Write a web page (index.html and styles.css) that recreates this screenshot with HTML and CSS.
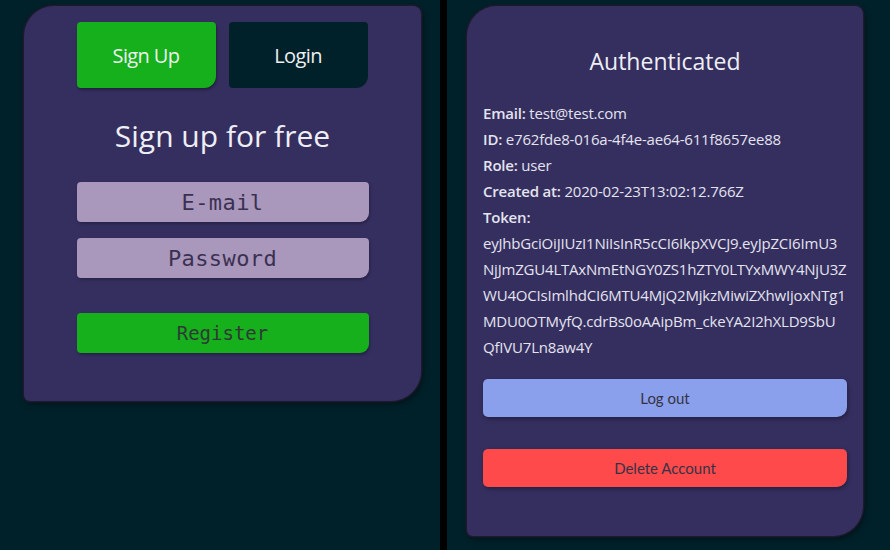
FILE: index.html
```html
<!DOCTYPE html>
<html>
<head>
<meta charset="utf-8">
<link rel="stylesheet" href="styles.css">
</head>
<body>
<div class="page">
  <section class="panel panel-left">
    <div class="card card-left">
      <div class="tabs">
        <button class="tab tab-active">Sign Up</button>
        <button class="tab tab-idle">Login</button>
      </div>
      <h1 class="title">Sign up for free</h1>
      <div class="field">E-mail</div>
      <div class="field">Password</div>
      <button class="register">Register</button>
    </div>
  </section>
  <div class="divider"></div>
  <section class="panel panel-right">
    <div class="card card-right">
      <h2 class="auth-title">Authenticated</h2>
      <div class="info">
        <p><b>Email:</b> test@test.com</p>
        <p><b>ID:</b> e762fde8-016a-4f4e-ae64-611f8657ee88</p>
        <p><b>Role:</b> user</p>
        <p><b>Created at:</b> 2020-02-23T13:02:12.766Z</p>
        <p><b>Token:</b></p>
        <p class="token">eyJhbGciOiJIUzI1NiIsInR5cCI6IkpXVCJ9.eyJpZCI6ImU3<br>NjJmZGU4LTAxNmEtNGY0ZS1hZTY0LTYxMWY4NjU3Z<br>WU4OCIsImlhdCI6MTU4MjQ2MjkzMiwiZXhwIjoxNTg1<br>MDU0OTMyfQ.cdrBs0oAAipBm_ckeYA2I2hXLD9SbU<br>QfIVU7Ln8aw4Y</p>
      </div>
      <button class="action logout">Log out</button>
      <button class="action delete">Delete Account</button>
    </div>
  </section>
</div>
</body>
</html>
```

FILE: styles.css
```css
* { box-sizing: border-box; }
html, body { margin: 0; padding: 0; }
body {
  background: #00212a;
  width: 890px;
  height: 550px;
  overflow: hidden;
  font-family: "Open Sans", "Noto Sans", sans-serif;
}
.page {
  display: flex;
  height: 550px;
}
.panel-left {
  width: 440px;
  padding: 6px 0 0 24px;
}
.divider {
  width: 7px;
  background: #000;
}
.panel-right {
  width: 443px;
  padding: 6px 0 0 20px;
}
.card {
  background: #352f60;
  border-radius: 30px 8px 30px 6px;
  box-shadow: 0 0 0 1.5px #1c1a2c, 2px 3px 6px rgba(0,0,0,0.45);
}
.card-left {
  width: 397px;
  height: 395px;
  padding: 16px 0 0 0;
  display: flex;
  flex-direction: column;
  align-items: center;
}
.tabs {
  display: flex;
  gap: 13px;
  margin-left: -1px;
}
.tab {
  border: none;
  width: 139px;
  height: 66px;
  font-family: "Open Sans", sans-serif;
  font-size: 20px;
  color: #eef0f0;
  border-radius: 4px 4px 12px 4px;
  letter-spacing: -0.6px;
  padding: 0;
}
.tab-active {
  background: #15b01b;
  box-shadow: 1px 2px 3px rgba(0,0,0,0.35);
}
.tab-idle {
  background: #00212a;
}
.title {
  margin: 28px 0 0 0;
  font-weight: 400;
  font-size: 30px;
  line-height: 40px;
  color: #eeeef4;
  letter-spacing: 0px;
}
.field {
  width: 292px;
  height: 40px;
  margin-top: 16px;
  background: #aa97bc;
  border-radius: 4px 4px 9px 4px;
  font-family: "DejaVu Sans Mono", monospace;
  font-size: 22px;
  color: #3a3152;
  display: flex;
  align-items: center;
  justify-content: center;
  box-shadow: 1px 2px 3px rgba(0,0,0,0.25);
  letter-spacing: 0.4px;
}
.title + .field { margin-top: 26px; }
.register {
  width: 292px;
  height: 40px;
  margin-top: 35px;
  border: none;
  background: #15b01b;
  border-radius: 4px 4px 9px 4px;
  font-family: "DejaVu Sans Mono", monospace;
  font-size: 19px;
  color: #2f3a36;
  box-shadow: 1px 2px 3px rgba(0,0,0,0.3);
  letter-spacing: 0;
  padding: 0;
}
.card-right {
  width: 396px;
  height: 530px;
  padding: 0 16px 0 16px;
  display: flex;
  flex-direction: column;
}
.auth-title {
  margin: 39px 0 0 0;
  text-align: center;
  font-weight: 400;
  font-size: 23px;
  line-height: 32px;
  color: #eeeef4;
}
.info {
  margin-top: 23px;
  color: #e4e3ee;
  font-size: 15px;
}
.info p {
  margin: 0;
  line-height: 26px;
  letter-spacing: -0.2px;
}
.info b { font-weight: 600; }
.token {
  white-space: nowrap;
}
.action {
  border: none;
  width: 364px;
  height: 38px;
  border-radius: 5px 5px 10px 5px;
  font-family: "Lato", sans-serif;
  font-size: 15px;
  color: #343346;
  box-shadow: 1px 2px 4px rgba(0,0,0,0.35);
  padding: 0;
}
.logout {
  margin-top: 19px;
  background: #8ba0ec;
}
.delete {
  margin-top: 32px;
  background: #ff4a4c;
}
```
